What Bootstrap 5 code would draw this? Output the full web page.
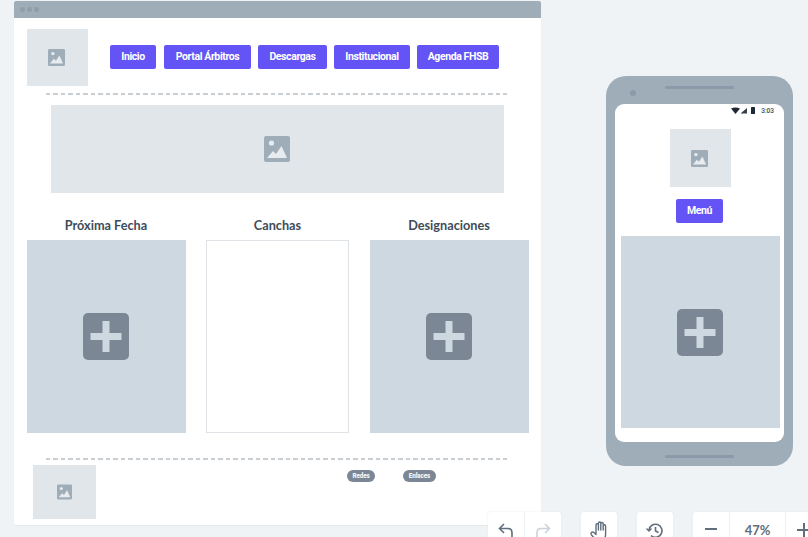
<!DOCTYPE html>
<html lang="es"><head><meta charset="utf-8"><title>Wireframe</title>
<link href="https://cdn.jsdelivr.net/npm/bootstrap@5.3.0/dist/css/bootstrap.min.css" rel="stylesheet">
<style>
html,body{height:537px;overflow:hidden}
body{background:#eff3f6;position:relative;font-family:"Lato",sans-serif}
.stage{padding:1px 0 0 14px;gap:65px}
.win{width:527px;height:524px;background:#fff;border-radius:2px;box-shadow:0 1px 1px #e3e8ec;flex:none}
.winbar{height:17px;background:#9fadb9;border-radius:2px 2px 0 0;padding-left:6px;gap:2px}
.winbar i{width:5px;height:5px;border-radius:50%;background:#8f9eab;display:block}
.ph{background:#e1e6eb;display:flex;align-items:center;justify-content:center;flex:none}
.ph svg{display:block}
.nudge{margin-right:2px}
.logo-a{width:61px;height:57px}
.head{padding:11px 0 0 13px;gap:22px}
.btn.navbtn{background:#6554f5;border:0;color:#fff;font:700 10.500px/24px "Roboto",sans-serif;letter-spacing:-.4px;padding:0;height:24px;border-radius:2px;text-align:center}
.w46{width:46px;margin-right:1px}.w87{width:87px}.w69{width:69px}.w76{width:76px}.w82{width:82px}.w47{width:47px}
.btns{gap:7px;margin-top:-1px}
.rule{height:2px;width:461px;margin-left:32px;background:repeating-linear-gradient(90deg,#c9ced3 0 4.500px,transparent 4.500px 7.500px)}
.rule.r1{margin-top:7px}
.hero{width:453px;height:88px;margin:10px 0 0 37px}
.cols{display:grid;grid-template-columns:159px 144px 159px;column-gap:20px;margin-left:13px}
.ttl{font:700 12.700px/14px "Lato",sans-serif;color:#3e4c59;text-align:center;height:47px;padding:25px 1px 0 0}
.tile{height:193px;background:#cdd8e1;display:flex;align-items:center;justify-content:center}
.tile.blank{background:#fff;border:1px solid #dfe3e7;width:143px}
.rule.r2{margin-top:25px}
.foot{padding:5px 0 0 19px}
.logo-b{width:63px;height:54px}
.pills{margin:5px 0 0 251px;gap:28px}
.pl{background:#7b8794;color:#f2f4f6;font:900 6.300px/12px "Roboto",sans-serif;height:12px;border-radius:6px;text-align:center;letter-spacing:-.1px}
.pl1{width:28px}.pl2{width:33px}
.phone{width:187px;height:390px;margin-top:75px;background:#9fadb9;border-radius:20px;flex:none;padding:28px 9px 0;position:relative}
.spk{position:absolute;left:59px;width:69px;height:3px;border-radius:2px;background:#8b9aa8}
.spk.top{top:10px}.spk.bot{bottom:8px}
.cam{position:absolute;left:24px;top:14px;width:6px;height:6px;border-radius:50%;background:#8b9aa8}
.screen{width:169px;height:338px;background:#fff;border-radius:9px}
.status{height:13px;padding:0 10px 0 0;font:500 6.500px/10px "Roboto",sans-serif;color:#3e4c59;margin-bottom:12px}
.status-t{margin-left:6px}
.logo-c{width:61px;height:58px;margin:0 0 0 55px}
.menuwrap{margin-top:12px}
.mtile{width:159px;height:192px;margin:13px 0 0 6px}
.tools{position:absolute;left:488px;top:512px;height:30px;gap:20px}
.tg{background:#fff;border-radius:3px 3px 0 0;height:30px;box-shadow:0 0 2px #e3e8ec}
.tb{width:36px;height:30px;display:flex;justify-content:center;padding-top:9px;border-left:1px solid #eef1f4;flex:none}
.tb:first-child{border-left:0}
.tb.w37{width:37px}
.tb.pct{width:56px;font:700 13px/18px "Lato",sans-serif;color:#616e7c;padding-top:9px}
</style></head><body>
<svg width="0" height="0" class="position-absolute"><defs>
<symbol id="imgi" viewBox="0 0 26 26"><rect width="26" height="26" rx="2" fill="#9fadb9"/><circle cx="7.500" cy="7" r="2.600" fill="#e8ecef"/><path d="M3 22l6-7 3 3 5.500-8L23 22z" fill="#e8ecef"/></symbol>
<symbol id="plusi" viewBox="0 0 46 47"><rect width="46" height="47" rx="5" fill="#7b8794"/><path d="M19.500 8h7v12h12v7h-12v12h-7V27h-12v-7h12z" fill="#cdd8e1"/></symbol>
</defs></svg>
<div class="stage d-flex align-items-start">
 <div class="win d-flex flex-column">
  <div class="winbar d-flex align-items-center"><i></i><i></i><i></i></div>
  <div class="head d-flex align-items-center">
   <div class="ph logo-a"><svg class="nudge" width="17" height="17"><use href="#imgi"/></svg></div>
   <div class="btns d-flex">
    <a class="btn navbtn w46">Inicio</a><a class="btn navbtn w87">Portal Árbitros</a><a class="btn navbtn w69">Descargas</a><a class="btn navbtn w76">Institucional</a><a class="btn navbtn w82">Agenda FHSB</a>
   </div>
  </div>
  <div class="rule r1"></div>
  <div class="ph hero"><svg class="nudge" width="26" height="26"><use href="#imgi"/></svg></div>
  <div class="cols">
   <div class="ttl">Próxima Fecha</div><div class="ttl">Canchas</div><div class="ttl">Designaciones</div>
   <div class="tile"><svg class="nudge" width="46" height="47"><use href="#plusi"/></svg></div>
   <div class="tile blank"></div>
   <div class="tile"><svg class="nudge" width="46" height="47"><use href="#plusi"/></svg></div>
  </div>
  <div class="rule r2"></div>
  <div class="foot d-flex align-items-start">
   <div class="ph logo-b"><svg width="15" height="16"><use href="#imgi"/></svg></div>
   <div class="pills d-flex"><span class="pl pl1">Redes</span><span class="pl pl2">Enlaces</span></div>
  </div>
 </div>
 <div class="phone">
  <div class="spk top"></div><div class="cam"></div><div class="spk bot"></div>
  <div class="screen d-flex flex-column">
   <div class="status d-flex justify-content-end align-items-center">
    <svg width="24" height="7" viewBox="0 0 24 7"><path d="M0 1.500Q4.500-.5 9 1.500L4.500 7z" fill="#1f2933"/><path d="M9.500 6.500L16 1v5.500z" fill="#323f4b"/><rect x="20" y="0" width="4" height="7" rx=".5" fill="#1f2933"/></svg>
    <span class="status-t">3:03</span>
   </div>
   <div class="ph logo-c"><svg class="nudge" width="17" height="17"><use href="#imgi"/></svg></div>
   <div class="menuwrap d-flex justify-content-center"><a class="btn navbtn w47">Menú</a></div>
   <div class="tile mtile"><svg class="nudge" width="46" height="47"><use href="#plusi"/></svg></div>
  </div>
 </div>
</div>
<div class="tools d-flex">
 <div class="tg d-flex">
  <div class="tb"><svg width="18" height="18" viewBox="0 0 18 18" fill="none" stroke="#616e7c" stroke-width="1.600"><path d="M7 3L2.500 7.500 7 12M3 7.500h8q4 0 4 4.500v4"/></svg></div>
  <div class="tb w37"><svg width="18" height="18" viewBox="0 0 18 18" fill="none" stroke="#cbd2d9" stroke-width="1.600"><path d="M11 3l4.500 4.500L11 12M15 7.500H7q-4 0-4 4.500v4"/></svg></div>
 </div>
 <div class="tg d-flex"><div class="tb"><svg width="20" height="20" viewBox="0 0 20 20" fill="none" stroke="#616e7c" stroke-width="1.400" stroke-linecap="round" stroke-linejoin="round"><path d="M7 13.500V4a1.200 1.200 0 0 1 2.400 0v5M9.400 9V2.200a1.200 1.200 0 0 1 2.400 0V9M11.800 9V2.700a1.200 1.200 0 0 1 2.400 0V9M14.200 9V5a1.200 1.200 0 0 1 2.400 0v8q0 6-5 7M7 13.500L5 11.500q-1.500-1-2.500 0t0 2.500l4 4.500"/></svg></div></div>
 <div class="tg d-flex"><div class="tb"><svg width="20" height="20" viewBox="0 0 20 20" fill="none" stroke="#616e7c" stroke-width="1.600"><path d="M4 9a6.500 6.500 0 1 1 2 5.500"/><path d="M1.500 7.500L4 10l2.500-2.500" stroke-width="1.400"/><path d="M10.500 6v4l3 1.500"/></svg></div></div>
 <div class="tg d-flex">
  <div class="tb"><svg width="14" height="18" viewBox="0 0 14 18"><rect x="1" y="7" width="12" height="2" fill="#616e7c"/></svg></div>
  <div class="tb pct">47%</div>
  <div class="tb"><svg width="14" height="18" viewBox="0 0 14 18"><path d="M6 2h2v6h6v2H8v6H6v-6H0V8h6z" fill="#616e7c"/></svg></div>
 </div>
</div>
</body></html>
